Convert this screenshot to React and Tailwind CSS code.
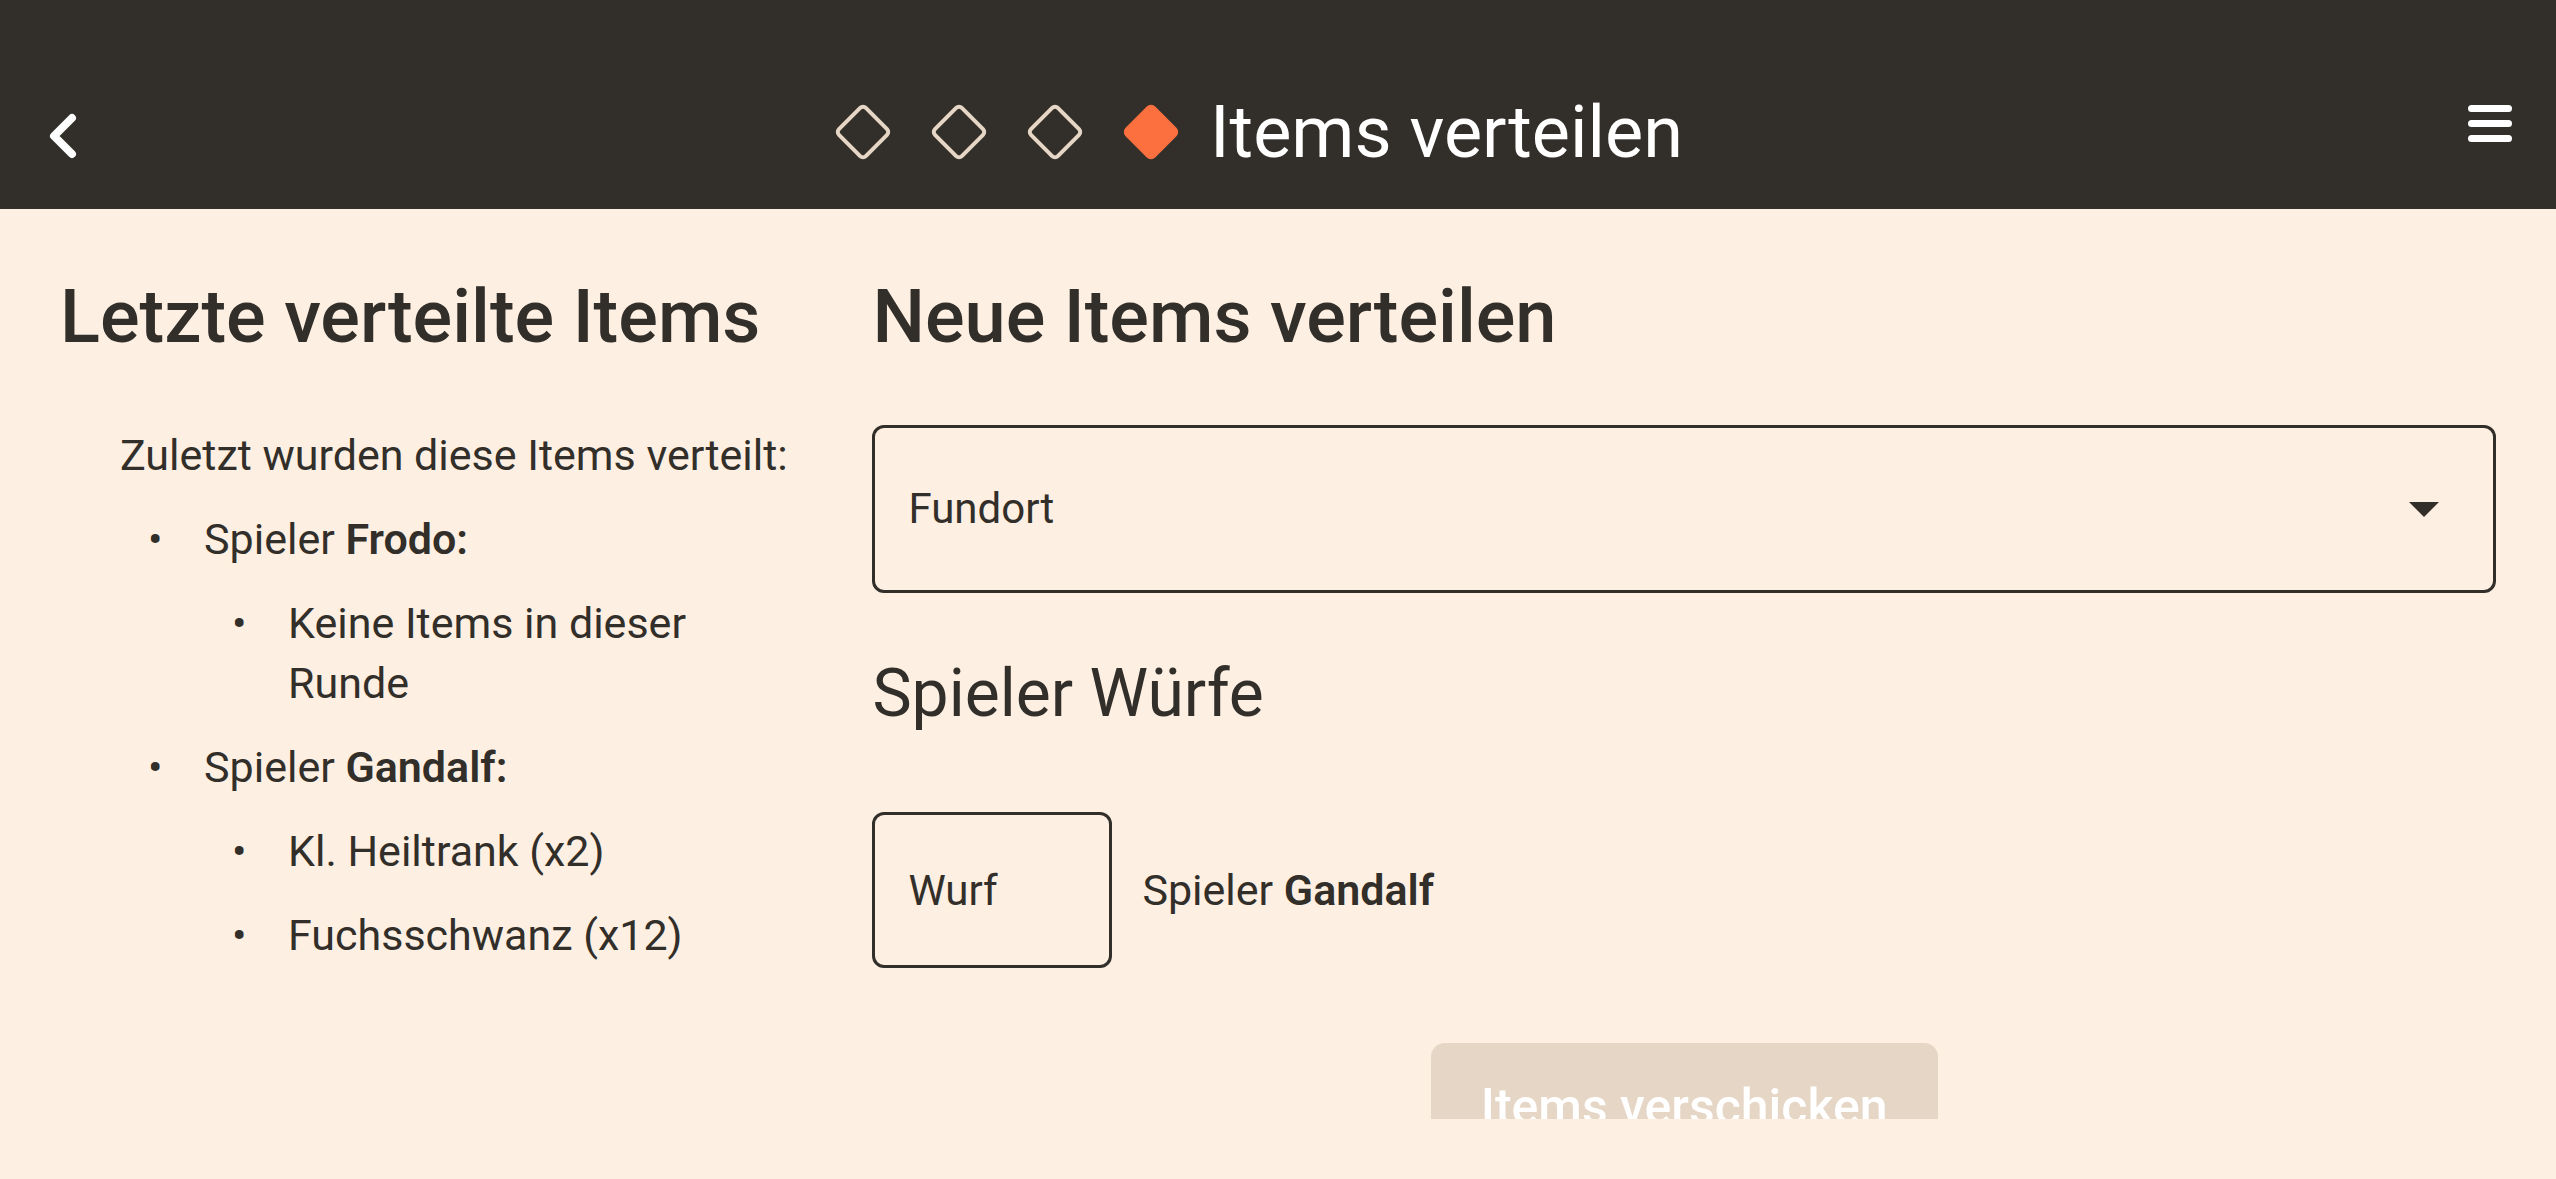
import React from "react";

const steps = [false, false, false, true];

const players = [
  { name: "Frodo", items: ["Keine Items in dieser Runde"] },
  { name: "Gandalf", items: ["Kl. Heiltrank (x2)", "Fuchsschwanz (x12)"] },
];

function Diamond({ active }) {
  return (
    <svg className="h-24 w-24" viewBox="0 0 96 96" aria-hidden="true">
      <rect
        x="29"
        y="29"
        width="38"
        height="38"
        rx="4"
        transform="rotate(45 48 48)"
        fill={active ? "#fc703f" : "none"}
        stroke={active ? "#fc703f" : "#e6d6c5"}
        strokeWidth="4"
      />
    </svg>
  );
}

function Header() {
  return (
    <header className="grid shrink-0 grid-cols-[1fr_auto_1fr] items-center bg-[#322e29] pt-14 pr-[38px] pl-9">
      <button type="button" aria-label="Zurück" className="h-20 w-14 justify-self-start text-white">
        <svg className="h-20 w-14" viewBox="0 0 56 80" fill="none" stroke="currentColor" strokeWidth="8" strokeLinecap="round" strokeLinejoin="round">
          <path d="M36 25 L18 43 L36 61" />
        </svg>
      </button>
      <div className="flex items-center pr-14">
        <div className="flex pb-0.5" role="img" aria-label="Schritt 4 von 4">
          {steps.map((active, i) => (
            <Diamond key={i} active={active} />
          ))}
        </div>
        <h1 className="pl-[11px] text-[72px] leading-[153px] text-white">Items verteilen</h1>
      </div>
      <button type="button" aria-label="Menü" className="mb-[18px] flex h-20 w-14 flex-col items-center justify-center gap-2 justify-self-end">
        <span className="h-[7px] w-11 rounded-full bg-white" />
        <span className="h-[7px] w-11 rounded-full bg-white" />
        <span className="h-[7px] w-11 rounded-full bg-white" />
      </button>
    </header>
  );
}

function ListRow({ children }) {
  return (
    <div className="flex">
      <span className="w-14 shrink-0">•</span>
      <span>{children}</span>
    </div>
  );
}

function LastItems() {
  return (
    <section className="text-[43px]">
      <h2 className="text-[74px] leading-[88px] font-medium">Letzte verteilte Items</h2>
      <div className="mt-16 pl-[60px]">
        <p className="whitespace-nowrap">Zuletzt wurden diese Items verteilt:</p>
        <ul className="mt-6 flex flex-col gap-6 pl-7">
          {players.map((player) => (
            <li key={player.name}>
              <ListRow>
                Spieler <b className="font-semibold">{player.name}:</b>
              </ListRow>
              <ul className="mt-6 flex flex-col gap-6 pl-[84px]">
                {player.items.map((item) => (
                  <li key={item}>
                    <ListRow>{item}</ListRow>
                  </li>
                ))}
              </ul>
            </li>
          ))}
        </ul>
      </div>
    </section>
  );
}

function NewItems() {
  return (
    <section className="flex flex-col">
      <h2 className="text-[74px] leading-[88px] font-medium">Neue Items verteilen</h2>
      <div className="mt-16 grid items-center">
        <select
          aria-label="Fundort"
          defaultValue=""
          className="col-start-1 row-start-1 h-[168px] w-full appearance-none rounded-xl border-[3px] border-[#322e29] bg-transparent px-[33px]"
        >
          <option value="">Fundort</option>
        </select>
        <svg className="pointer-events-none col-start-1 row-start-1 mr-14 h-4 w-8 justify-self-end" viewBox="0 0 32 16" aria-hidden="true">
          <path d="M1 1 H31 L16 16 Z" fill="#322e29" />
        </svg>
      </div>
      <h3 className="mt-[61px] text-[66px] leading-[80px]">Spieler Würfe</h3>
      <div className="mt-[78px] flex items-center gap-[30px]">
        <input
          id="wurf"
          type="text"
          placeholder="Wurf"
          className="h-[156px] w-60 rounded-xl border-[3px] border-[#322e29] bg-transparent px-[33px] placeholder:text-[#322e29] placeholder:opacity-100"
        />
        <label htmlFor="wurf" className="text-[43px]">
          Spieler <b className="font-semibold">Gandalf</b>
        </label>
      </div>
      <button
        type="button"
        disabled
        className="mt-[75px] self-center rounded-[14px] bg-[#e6d6c5] px-[50px] py-8 text-[50px] leading-[64px] font-medium text-white"
      >
        Items verschicken
      </button>
    </section>
  );
}

export default function App() {
  return (
    <div className="flex h-screen flex-col bg-[#fdefe2] pb-[60px] font-['Roboto',sans-serif] text-[42px] leading-[60px] text-[#322e29]">
      <Header />
      <main className="grid min-h-0 flex-1 grid-cols-[minmax(0,19fr)_minmax(0,41fr)] gap-x-[60px] overflow-hidden px-[60px] pt-16">
        <LastItems />
        <NewItems />
      </main>
    </div>
  );
}
